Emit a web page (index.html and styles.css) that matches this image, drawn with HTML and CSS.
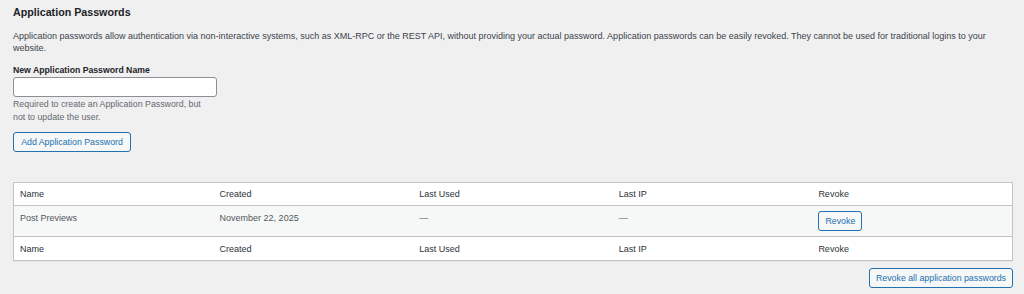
FILE: index.html
```html
<!DOCTYPE html>
<html>
<head>
<meta charset="utf-8">
<link rel="stylesheet" href="styles.css">
</head>
<body>
<div class="page">
  <h2 class="title">Application Passwords</h2>
  <p class="desc">Application passwords allow authentication via non-interactive systems, such as XML-RPC or the REST API, without providing your actual password. Application passwords can be easily revoked. They cannot be used for traditional logins to your website.</p>
  <div class="field">
    <label class="label" for="name">New Application Password Name</label>
    <input class="input" id="name" type="text">
    <p class="help">Required to create an Application Password, but<br>not to update the user.</p>
  </div>
  <button class="btn btn-add">Add Application Password</button>
  <table class="table">
    <colgroup><col class="col"><col class="col"><col class="col"><col class="col"><col class="col"></colgroup>
    <thead>
      <tr><th>Name</th><th>Created</th><th>Last Used</th><th>Last IP</th><th>Revoke</th></tr>
    </thead>
    <tbody>
      <tr><td>Post Previews</td><td>November 22, 2025</td><td>—</td><td>—</td><td><button class="btn btn-small">Revoke</button></td></tr>
    </tbody>
    <tfoot>
      <tr><th>Name</th><th>Created</th><th>Last Used</th><th>Last IP</th><th>Revoke</th></tr>
    </tfoot>
  </table>
  <div class="actions">
    <button class="btn btn-all">Revoke all application passwords</button>
  </div>
</div>
</body>
</html>
```

FILE: styles.css
```css
html, body {
  margin: 0;
  padding: 0;
  background: #f0f0f1;
}
body {
  font-family: "Liberation Sans", Arial, sans-serif;
  font-size: 8.8px;
  color: #1d2327;
}
.page {
  padding: 0 11px 0 13px;
}
.title {
  font-size: 10.7px;
  font-weight: 700;
  margin: 0;
  padding-top: 5px;
  line-height: 15px;
  height: 15px;
  color: #1d2327;
}
.desc {
  font-size: 9px;
  margin: 10px 0 0;
  line-height: 12px;
  color: #3c434a;
}
.field {
  margin-top: 10px;
}
.label {
  display: block;
  font-size: 8.7px;
  font-weight: 700;
  line-height: 12px;
  color: #1d2327;
}
.input {
  display: block;
  box-sizing: border-box;
  width: 204px;
  height: 20px;
  margin: 1px 0 0;
  border: 1px solid #8c8f94;
  border-radius: 3px;
  background: #fff;
}
.help {
  margin: 1px 0 0;
  line-height: 13px;
  color: #646970;
}
.btn {
  font-family: inherit;
  font-size: 8.8px;
  box-sizing: border-box;
  height: 20px;
  padding: 0 7px;
  border: 1px solid #2271b1;
  border-radius: 3px;
  background: #f6f7f7;
  color: #2271b1;
  line-height: 18px;
  white-space: nowrap;
  cursor: pointer;
}
.btn-add {
  display: block;
  margin-top: 8px;
  width: 118px;
  padding: 0;
}
.table {
  margin-top: 30px;
  width: 1000px;
  box-sizing: border-box;
  border-collapse: separate;
  border-spacing: 0;
  border: 1px solid #c3c4c7;
  background: #fff;
  box-shadow: 0 1px 1px rgba(0,0,0,0.04);
  table-layout: fixed;
  font-size: 9px;
}
.col {
  width: 20%;
}
.table th, .table td {
  text-align: left;
  font-weight: 400;
  padding: 0 6px;
}
.table thead th {
  height: 22px;
  border-bottom: 1px solid #c3c4c7;
  color: #2c3338;
}
.table tfoot th {
  height: 23px;
  border-top: 1px solid #c3c4c7;
  color: #2c3338;
}
.table tbody td {
  background: #f6f7f7;
  color: #50575e;
  height: 30px;
  vertical-align: top;
  padding-top: 7px;
  box-sizing: border-box;
}
.table tbody td:last-child {
  padding-top: 5px;
}
.btn-small {
  width: 44px;
  padding: 0;
}
.actions {
  display: flex;
  justify-content: flex-end;
  width: 1000px;
  margin-top: 7px;
}
.btn-all {
  width: 144px;
  padding: 0;
}
```
